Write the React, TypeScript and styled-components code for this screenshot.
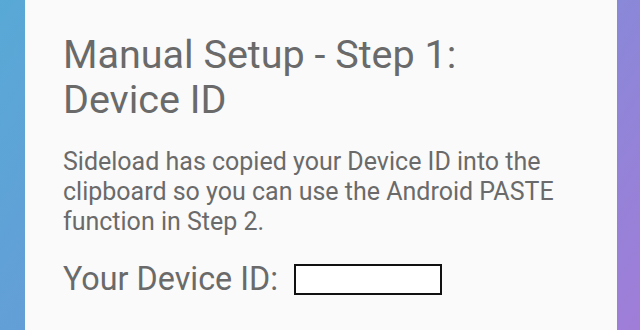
import React from "react";
import styled, { createGlobalStyle } from "styled-components";

const Global = createGlobalStyle`
  html, body { margin: 0; padding: 0; }
  body {
    width: 640px;
    height: 330px;
    overflow: hidden;
    font-family: Roboto, "Liberation Sans", sans-serif;
  }
`;

const Screen = styled.div`
  width: 640px;
  height: 330px;
  display: flex;
  justify-content: flex-start;
  padding-left: 25px;
  box-sizing: border-box;
  background: linear-gradient(120deg, #58a9d6 0%, #6a98d8 40%, #8a88d8 75%, #a07dd8 100%);
`;

const Card = styled.div`
  width: 592px;
  height: 330px;
  box-sizing: border-box;
  background: #fafafa;
  padding: 32px 38px 0 38px;
  display: flex;
  flex-direction: column;
  color: #6a6a6a;
`;

const Title = styled.h1`
  margin: 0;
  font-size: 39.5px;
  line-height: 45px;
  font-weight: 400;
`;

const Body = styled.p`
  margin: 25px 0 0 0;
  font-size: 25px;
  line-height: 30px;
  font-weight: 400;
`;

const IdRow = styled.div`
  margin-top: 22px;
  display: flex;
  align-items: center;
  gap: 16px;
  height: 40px;
`;

const IdLabel = styled.span`
  font-size: 32.3px;
  line-height: 40px;
`;

const IdBox = styled.div`
  width: 144px;
  height: 27px;
  border: 2px solid #111;
  background: #fff;
`;

export default function App() {
  return (
    <>
      <Global />
      <Screen>
        <Card>
          <Title>
            Manual Setup - Step 1:
            <br />
            Device ID
          </Title>
          <Body>
            Sideload has copied your Device ID into the clipboard so you can use the Android PASTE
            function in Step 2.
          </Body>
          <IdRow>
            <IdLabel>Your Device ID:</IdLabel>
            <IdBox />
          </IdRow>
        </Card>
      </Screen>
    </>
  );
}
